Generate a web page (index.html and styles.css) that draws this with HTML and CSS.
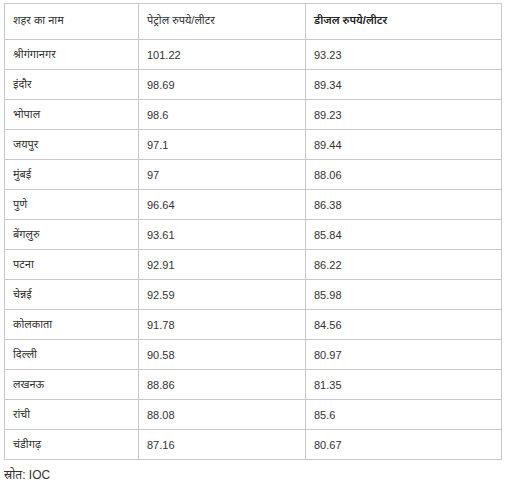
FILE: index.html
```html
<!DOCTYPE html>
<html lang="hi">
<head>
<meta charset="utf-8">
<link rel="stylesheet" href="styles.css">
</head>
<body>
<table class="rates">
  <colgroup>
    <col class="c1"><col class="c2"><col class="c3">
  </colgroup>
  <thead>
    <tr class="head"><th>शहर का नाम</th><th>पेट्रोल रुपये/लीटर</th><th class="dark">डीजल रुपये/लीटर</th></tr>
  </thead>
  <tbody>
    <tr><td>श्रीगंगानगर</td><td>101.22</td><td>93.23</td></tr>
    <tr><td>इंदौर</td><td>98.69</td><td>89.34</td></tr>
    <tr><td>भोपाल</td><td>98.6</td><td>89.23</td></tr>
    <tr><td>जयपुर</td><td>97.1</td><td>89.44</td></tr>
    <tr><td>मुंबई</td><td>97</td><td>88.06</td></tr>
    <tr><td>पुणे</td><td>96.64</td><td>86.38</td></tr>
    <tr><td>बेंगलुरु</td><td>93.61</td><td>85.84</td></tr>
    <tr><td>पटना</td><td>92.91</td><td>86.22</td></tr>
    <tr><td>चेन्नई</td><td>92.59</td><td>85.98</td></tr>
    <tr><td>कोलकाता</td><td>91.78</td><td>84.56</td></tr>
    <tr><td>दिल्ली</td><td>90.58</td><td>80.97</td></tr>
    <tr><td>लखनऊ</td><td>88.86</td><td>81.35</td></tr>
    <tr><td>रांची</td><td>88.08</td><td>85.6</td></tr>
    <tr><td>चंडीगढ़</td><td>87.16</td><td>80.67</td></tr>
  </tbody>
</table>
<p class="source">स्रोत: IOC</p>
</body>
</html>
```
FILE: styles.css
```css
html, body {
  margin: 0;
  padding: 0;
  background: #fff;
}
body {
  padding: 3px 4px 0 4px;
  font-family: "Liberation Sans", "Noto Sans Devanagari", "Noto Sans", sans-serif;
  color: #333;
}
.rates {
  border-collapse: collapse;
  width: 497px;
  table-layout: fixed;
  font-size: 11px;
}
.c1 { width: 134px; }
.c2 { width: 167px; }
.c3 { width: 196px; }
.rates th, .rates td {
  border: 1px solid #c8c8c8;
  padding: 0 8px;
  text-align: left;
  vertical-align: middle;
  font-weight: normal;
  height: 30px;
  box-sizing: border-box;
}
.rates tr.head th {
  height: 36px;
  padding-bottom: 2px;
}
.rates th.dark {
  color: #222;
  font-weight: 600;
}
.source {
  margin: 8px 0 0 0;
  font-size: 12px;
  color: #333;
}
```
